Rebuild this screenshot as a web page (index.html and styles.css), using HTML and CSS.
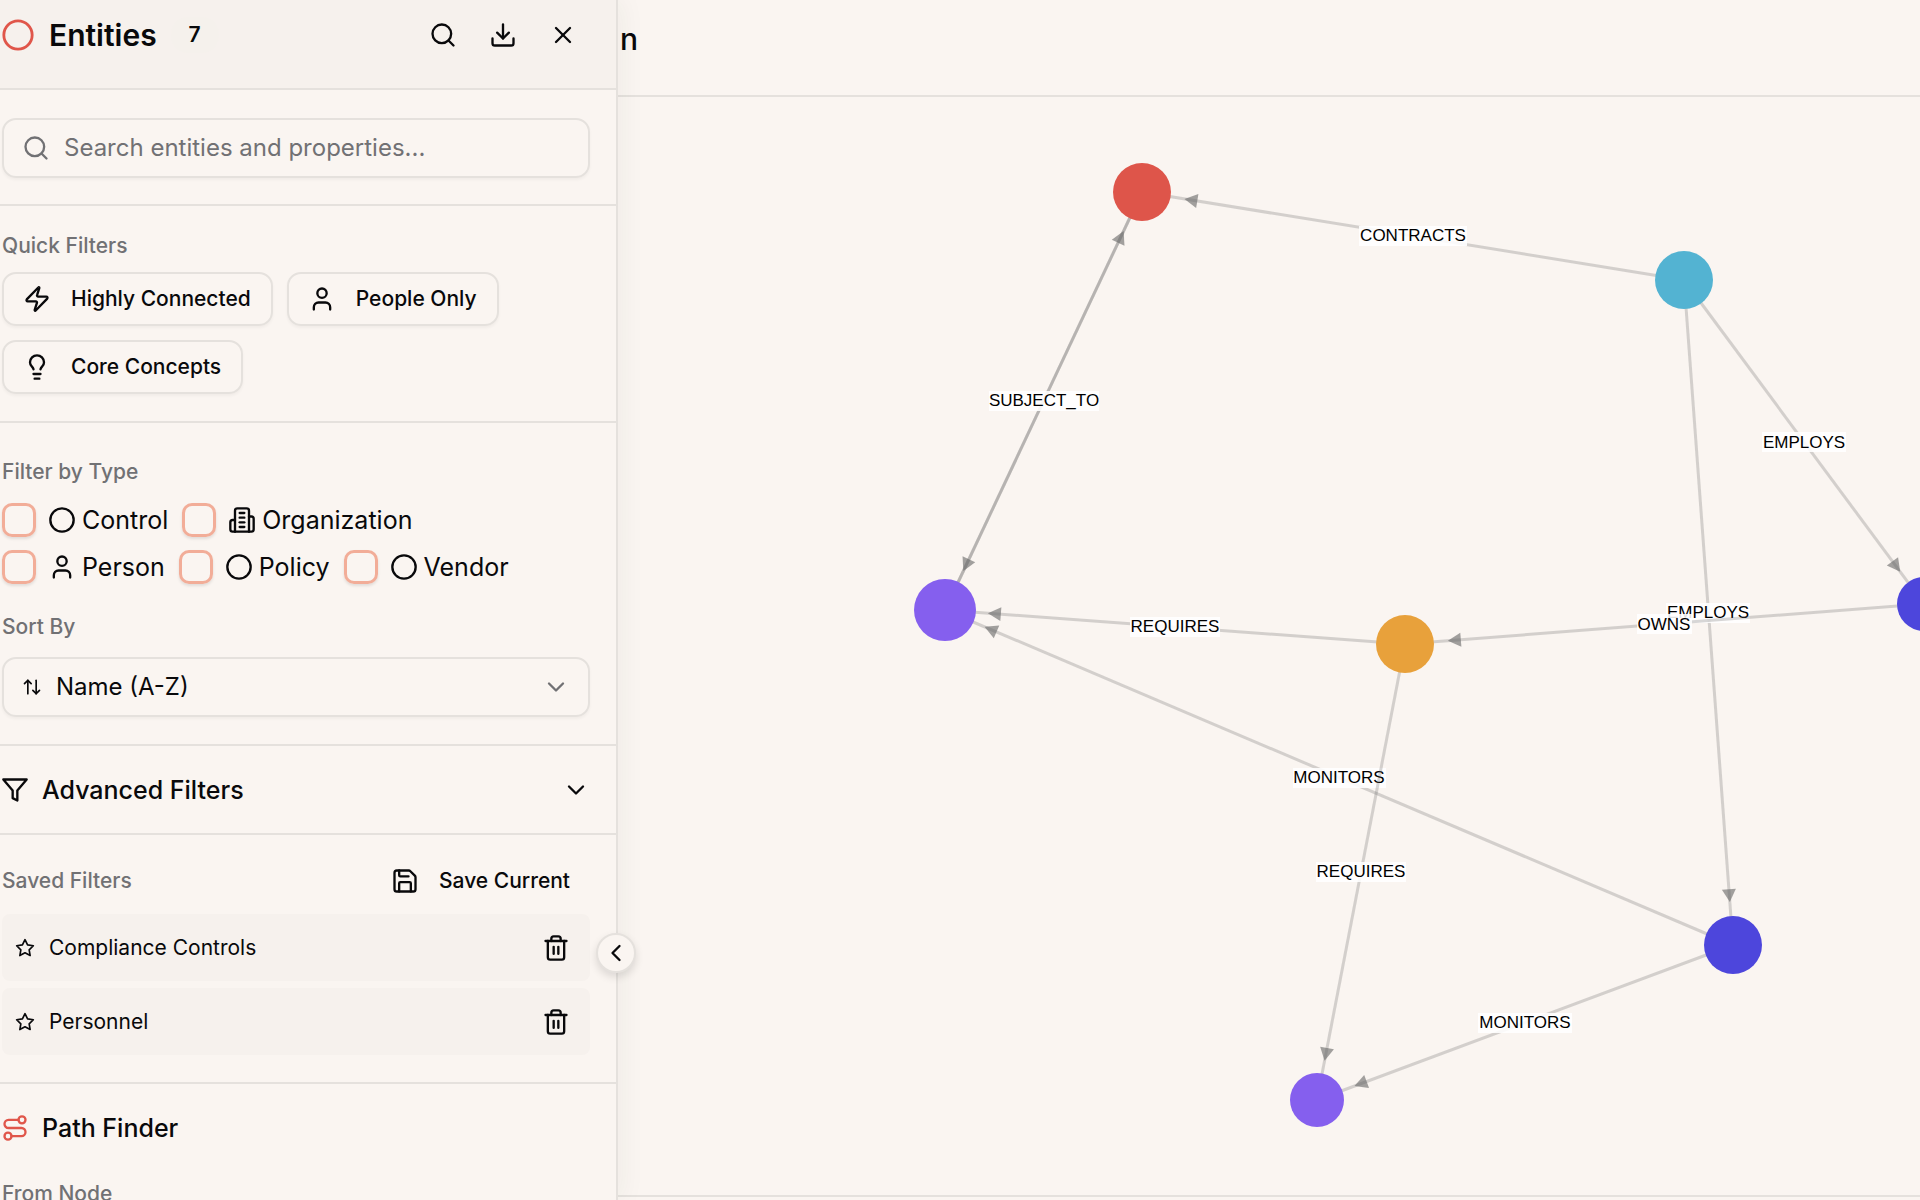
FILE: index.html
```html
<!DOCTYPE html>
<html lang="en">
<head>
<meta charset="utf-8">
<title>Entities</title>
<link rel="stylesheet" href="styles.css">
</head>
<body>
<svg class="sprite" aria-hidden="true">
  <symbol id="i-circle" viewBox="0 0 24 24"><circle cx="12" cy="12" r="10"/></symbol>
  <symbol id="i-search" viewBox="0 0 24 24"><circle cx="11" cy="11" r="8"/><path d="m21 21-4.3-4.3"/></symbol>
  <symbol id="i-download" viewBox="0 0 24 24"><path d="M21 15v4a2 2 0 0 1-2 2H5a2 2 0 0 1-2-2v-4"/><path d="m7 10 5 5 5-5"/><path d="M12 15V3"/></symbol>
  <symbol id="i-x" viewBox="0 0 24 24"><path d="M18 6 6 18"/><path d="m6 6 12 12"/></symbol>
  <symbol id="i-zap" viewBox="0 0 24 24"><path d="M4 14a1 1 0 0 1-.78-1.63l9.9-10.2a.5.5 0 0 1 .86.46l-1.92 6.02A1 1 0 0 0 13 10h7a1 1 0 0 1 .78 1.63l-9.9 10.2a.5.5 0 0 1-.86-.46l1.92-6.02A1 1 0 0 0 11 14z"/></symbol>
  <symbol id="i-user" viewBox="0 0 24 24"><path d="M19 21v-2a4 4 0 0 0-4-4H9a4 4 0 0 0-4 4v2"/><circle cx="12" cy="7" r="4"/></symbol>
  <symbol id="i-bulb" viewBox="0 0 24 24"><path d="M15 14c.2-1 .7-1.700 1.500-2.500 1-.9 1.500-2.200 1.500-3.500A6 6 0 0 0 6 8c0 1 .2 2.200 1.500 3.500.7.7 1.300 1.500 1.500 2.500"/><path d="M9 18h6"/><path d="M10 22h4"/></symbol>
  <symbol id="i-building" viewBox="0 0 24 24"><path d="M6 22V4a2 2 0 0 1 2-2h8a2 2 0 0 1 2 2v18Z"/><path d="M6 12H4a2 2 0 0 0-2 2v6a2 2 0 0 0 2 2h2"/><path d="M18 9h2a2 2 0 0 1 2 2v9a2 2 0 0 1-2 2h-2"/><path d="M10 6h4"/><path d="M10 10h4"/><path d="M10 14h4"/><path d="M10 18h4"/></symbol>
  <symbol id="i-sort" viewBox="0 0 24 24"><path d="m21 16-4 4-4-4"/><path d="M17 20V4"/><path d="m3 8 4-4 4 4"/><path d="M7 4v16"/></symbol>
  <symbol id="i-down" viewBox="0 0 24 24"><path d="m6 9 6 6 6-6"/></symbol>
  <symbol id="i-left" viewBox="0 0 24 24"><path d="m15 18-6-6 6-6"/></symbol>
  <symbol id="i-funnel" viewBox="0 0 24 24"><path d="M22 3H2l8 9.460V19l4 2v-8.540L22 3z"/></symbol>
  <symbol id="i-save" viewBox="0 0 24 24"><path d="M15.200 3a2 2 0 0 1 1.400.6l3.800 3.800a2 2 0 0 1 .6 1.400V19a2 2 0 0 1-2 2H5a2 2 0 0 1-2-2V5a2 2 0 0 1 2-2z"/><path d="M17 21v-7a1 1 0 0 0-1-1H8a1 1 0 0 0-1 1v7"/><path d="M7 3v4a1 1 0 0 0 1 1h7"/></symbol>
  <symbol id="i-star" viewBox="0 0 24 24"><path d="m12 2 3.090 6.260L22 9.270l-5 4.870 1.180 6.880L12 17.770l-6.180 3.250L7 14.140 2 9.270l6.910-1.010z"/></symbol>
  <symbol id="i-trash" viewBox="0 0 24 24"><path d="M3 6h18"/><path d="M19 6v14a2 2 0 0 1-2 2H7a2 2 0 0 1-2-2V6"/><path d="M8 6V4a2 2 0 0 1 2-2h4a2 2 0 0 1 2 2v2"/><path d="M10 11v6"/><path d="M14 11v6"/></symbol>
  <symbol id="i-route" viewBox="0 0 24 24"><circle cx="6" cy="19" r="3"/><path d="M9 19h8.500a3.500 3.500 0 0 0 0-7h-11a3.500 3.500 0 0 1 0-7H15"/><circle cx="18" cy="5" r="3"/></symbol>
</svg>

<div class="app">
  <aside class="sidebar">
    <div class="panel">
      <header class="panel-head">
        <svg class="icon icon-lg accent"><use href="#i-circle"/></svg>
        <h2 class="panel-title">Entities</h2>
        <span class="badge">7</span>
        <div class="panel-actions">
          <button class="icon-btn" aria-label="Search"><svg class="icon"><use href="#i-search"/></svg></button>
          <button class="icon-btn" aria-label="Download"><svg class="icon"><use href="#i-download"/></svg></button>
          <button class="icon-btn" aria-label="Close"><svg class="icon"><use href="#i-x"/></svg></button>
        </div>
      </header>

      <section class="section search-section">
        <div class="field">
          <svg class="icon muted"><use href="#i-search"/></svg>
          <input class="control" type="text" placeholder="Search entities and properties..." aria-label="Search entities and properties">
        </div>
      </section>

      <section class="section quick-section">
        <h3 class="label">Quick Filters</h3>
        <div class="chips">
          <button class="chip"><svg class="icon"><use href="#i-zap"/></svg>Highly Connected</button>
          <button class="chip"><svg class="icon"><use href="#i-user"/></svg>People Only</button>
          <button class="chip"><svg class="icon"><use href="#i-bulb"/></svg>Core Concepts</button>
        </div>
      </section>

      <section class="section type-section">
        <h3 class="label">Filter by Type</h3>
        <div class="types">
          <div class="type-row">
            <label class="type"><input class="check" type="checkbox"><svg class="icon"><use href="#i-circle"/></svg><span>Control</span></label>
            <label class="type"><input class="check" type="checkbox"><svg class="icon"><use href="#i-building"/></svg><span>Organization</span></label>
          </div>
          <div class="type-row">
            <label class="type"><input class="check" type="checkbox"><svg class="icon"><use href="#i-user"/></svg><span>Person</span></label>
            <label class="type"><input class="check" type="checkbox"><svg class="icon"><use href="#i-circle"/></svg><span>Policy</span></label>
            <label class="type"><input class="check" type="checkbox"><svg class="icon"><use href="#i-circle"/></svg><span>Vendor</span></label>
          </div>
        </div>
        <label class="label sort-label" for="sort">Sort By</label>
        <div class="field">
          <svg class="icon icon-sm"><use href="#i-sort"/></svg>
          <select class="control" id="sort"><option>Name (A-Z)</option></select>
          <svg class="icon muted"><use href="#i-down"/></svg>
        </div>
      </section>

      <section class="section">
        <button class="accordion">
          <svg class="icon"><use href="#i-funnel"/></svg>
          <span class="accordion-text">Advanced Filters</span>
          <svg class="icon"><use href="#i-down"/></svg>
        </button>
      </section>

      <section class="section saved-section">
        <div class="saved-head">
          <h3 class="label">Saved Filters</h3>
          <button class="save-btn"><svg class="icon"><use href="#i-save"/></svg>Save Current</button>
        </div>
        <ul class="saved-list">
          <li class="saved"><svg class="icon icon-sm"><use href="#i-star"/></svg><span class="saved-name">Compliance Controls</span><button class="icon-btn" aria-label="Delete Compliance Controls"><svg class="icon"><use href="#i-trash"/></svg></button></li>
          <li class="saved"><svg class="icon icon-sm"><use href="#i-star"/></svg><span class="saved-name">Personnel</span><button class="icon-btn" aria-label="Delete Personnel"><svg class="icon"><use href="#i-trash"/></svg></button></li>
        </ul>
      </section>

      <section class="path-section">
        <h3 class="path-title"><svg class="icon accent"><use href="#i-route"/></svg>Path Finder</h3>
        <div class="label">From Node</div>
      </section>
    </div>
    <button class="toggle" aria-label="Collapse panel"><svg class="icon"><use href="#i-left"/></svg></button>
  </aside>

  <main class="main">
    <header class="main-head"><h1 class="main-title">n</h1></header>
    <svg class="graph" viewBox="618 97 1302 1098" role="img" aria-label="Entity graph">
      <defs>
        <marker id="arrow-s" class="arrow" markerUnits="userSpaceOnUse" markerWidth="14" markerHeight="14" refX="40" orient="auto"><path d="M0 0-13-7V7z"/></marker>
        <marker id="arrow-m" class="arrow" markerUnits="userSpaceOnUse" markerWidth="14" markerHeight="14" refX="43" orient="auto"><path d="M0 0-13-7V7z"/></marker>
        <marker id="arrow-l" class="arrow" markerUnits="userSpaceOnUse" markerWidth="14" markerHeight="14" refX="43" orient="auto"><path d="M0 0-13-7V7z"/></marker>
      </defs>

      <line class="edge" x1="1142" y1="192" x2="945" y2="610" marker-end="url(#arrow-l)"/>
      <line class="edge" x1="945" y1="610" x2="1142" y2="192" marker-end="url(#arrow-m)"/>
      <rect class="tag" x="989" y="391" width="110" height="20"/><text class="tag-text" x="1044" y="406">SUBJECT_TO</text>

      <line class="edge" x1="1684" y1="280" x2="1142" y2="192" marker-end="url(#arrow-m)"/>
      <rect class="tag" x="1359" y="226" width="108" height="20"/><text class="tag-text" x="1413" y="241">CONTRACTS</text>

      <line class="edge" x1="1684" y1="280" x2="1924" y2="604" marker-end="url(#arrow-s)"/>
      <rect class="tag" x="1762" y="432" width="84" height="20"/><text class="tag-text" x="1804" y="448">EMPLOYS</text>

      <line class="edge" x1="1684" y1="280" x2="1733" y2="945" marker-end="url(#arrow-m)"/>
      <rect class="tag" x="1666" y="603" width="84" height="20"/><text class="tag-text" x="1708" y="618">EMPLOYS</text>

      <line class="edge" x1="1924" y1="604" x2="1405" y2="644" marker-end="url(#arrow-m)"/>
      <rect class="tag" x="1637" y="614" width="55" height="20"/><text class="tag-text" x="1664" y="630">OWNS</text>

      <line class="edge" x1="1405" y1="644" x2="945" y2="610" marker-end="url(#arrow-l)"/>
      <rect class="tag" x="1130" y="617" width="90" height="20"/><text class="tag-text" x="1175" y="632">REQUIRES</text>

      <line class="edge" x1="1733" y1="945" x2="945" y2="610" marker-end="url(#arrow-l)"/>
      <rect class="tag" x="1293" y="768" width="93" height="20"/><text class="tag-text" x="1339" y="783">MONITORS</text>

      <line class="edge" x1="1405" y1="644" x2="1317" y2="1100" marker-end="url(#arrow-s)"/>
      <rect class="tag" x="1316" y="862" width="90" height="20"/><text class="tag-text" x="1361" y="877">REQUIRES</text>

      <line class="edge" x1="1733" y1="945" x2="1317" y2="1100" marker-end="url(#arrow-s)"/>
      <rect class="tag" x="1478" y="1013" width="94" height="20"/><text class="tag-text" x="1525" y="1028">MONITORS</text>

      <circle class="node control-node" cx="1142" cy="192" r="29"/>
      <circle class="node vendor-node" cx="1684" cy="280" r="29"/>
      <circle class="node policy-node" cx="945" cy="610" r="31"/>
      <circle class="node org-node" cx="1405" cy="644" r="29"/>
      <circle class="node person-node" cx="1924" cy="604" r="27"/>
      <circle class="node person-node" cx="1733" cy="945" r="29"/>
      <circle class="node policy-node" cx="1317" cy="1100" r="27"/>
    </svg>
    <footer class="main-foot"></footer>
  </main>
</div>
</body>
</html>
```
FILE: styles.css
```css
:root {
  --bg: #faf5f1;
  --soft: #f6f1ed;
  --line: #e5e1dd;
  --ink: #09090b;
  --muted: #717174;
  --accent: #e0564a;
}

* { box-sizing: border-box; }

body {
  margin: 0;
  background: var(--bg);
  color: var(--ink);
  font-family: Inter, "Open Sans", sans-serif;
  font-size: 25px;
  line-height: 32px;
}

h1, h2, h3, ul { margin: 0; padding: 0; }

button {
  border: 0;
  padding: 0;
  background: none;
  color: inherit;
  font: inherit;
  cursor: pointer;
}

.sprite { display: none; }

.icon {
  flex: none;
  width: 28px;
  height: 28px;
  fill: none;
  stroke: currentColor;
  stroke-width: 2px;
  stroke-linecap: round;
  stroke-linejoin: round;
}
.icon-sm { width: 20px; height: 20px; }
.icon-lg { width: 34px; height: 34px; }
.accent { color: var(--accent); }
.muted { color: var(--muted); }

.app {
  display: flex;
  height: 100vh;
  overflow: hidden;
}

/* Sidebar */
.sidebar {
  position: relative;
  z-index: 1;
  flex: none;
  width: 618px;
  border-right: 2px solid var(--line);
  background: var(--bg);
  box-shadow: 4px 0 24px rgba(40, 50, 30, 0.05);
}
.panel { height: 100%; overflow: hidden; }

.panel-head {
  display: flex;
  align-items: center;
  height: 90px;
  padding: 0 39px 18px 1px;
  border-bottom: 2px solid var(--line);
  background: var(--soft);
}
.panel-title {
  margin-left: 14px;
  font-size: 30px;
  font-weight: 600;
}
.badge {
  margin-left: 14px;
  width: 48px;
  border-radius: 18px;
  background: #f5f1ec;
  font-size: 21px;
  font-weight: 600;
  line-height: 36px;
  text-align: center;
}
.panel-actions {
  display: flex;
  gap: 32px;
  margin-left: auto;
}
.icon-btn { display: flex; }

.section { border-bottom: 2px solid var(--line); }
.search-section { padding: 28px 26px 26px 2px; }
.quick-section { padding: 26px 26px 27px 2px; }
.type-section { padding: 35px 26px 27px 2px; }
.saved-section { padding: 19px 26px 27px 2px; }
.path-section { padding: 28px 26px 0 2px; }

.label {
  display: block;
  color: var(--muted);
  font-size: 21px;
  font-weight: 500;
  line-height: 28px;
}

.field {
  display: flex;
  align-items: center;
  gap: 14px;
  height: 60px;
  padding: 0 18px;
  border: 2px solid var(--line);
  border-radius: 14px;
  box-shadow: 0 2px 3px rgba(0, 0, 0, 0.04);
}
.control {
  flex: 1;
  min-width: 0;
  border: 0;
  padding: 0;
  outline: 0;
  background: none;
  color: inherit;
  font: inherit;
  font-size: 24px;
  appearance: none;
}
.control::placeholder { color: var(--muted); opacity: 1; }

.chips {
  display: flex;
  flex-wrap: wrap;
  gap: 14px;
  margin-top: 12px;
}
.chip {
  display: flex;
  align-items: center;
  gap: 20px;
  height: 54px;
  padding: 0 20px 0 19px;
  border: 2px solid var(--line);
  border-radius: 14px;
  box-shadow: 0 2px 3px rgba(0, 0, 0, 0.04);
  font-size: 21px;
  font-weight: 500;
}

.types { display: grid; gap: 13px; margin-top: 17px; }
.type-row { display: flex; gap: 14px; }
.type {
  display: flex;
  align-items: center;
  gap: 6px;
  height: 34px;
}
.check {
  appearance: none;
  width: 34px;
  height: 34px;
  margin: 0 6px 0 0;
  border: 3px solid #f2ad98;
  border-radius: 10px;
  box-shadow: 0 2px 3px rgba(0, 0, 0, 0.1);
}
.sort-label { margin: 29px 0 16px; }

.accordion {
  display: flex;
  align-items: center;
  gap: 13px;
  width: 100%;
  height: 87px;
  padding: 0 26px 0 1px;
  font-weight: 500;
}
.accordion-text { flex: 1; text-align: left; }

.saved-head {
  display: flex;
  align-items: center;
  justify-content: space-between;
  height: 54px;
  padding-right: 20px;
}
.save-btn {
  display: flex;
  align-items: center;
  gap: 20px;
  font-size: 21px;
  font-weight: 500;
}
.saved-list {
  display: grid;
  gap: 7px;
  margin-top: 6px;
  list-style: none;
}
.saved {
  display: flex;
  align-items: center;
  gap: 14px;
  height: 67px;
  padding: 0 20px 0 13px;
  border-radius: 8px;
  background: var(--soft);
}
.saved-name { flex: 1; font-size: 21px; }

.path-title {
  display: flex;
  align-items: center;
  gap: 13px;
  margin: 0 0 36px -1px;
  font-size: 25px;
  font-weight: 500;
}

.toggle {
  position: absolute;
  top: 933px;
  right: -20px;
  display: grid;
  place-items: center;
  width: 40px;
  height: 40px;
  border: 2px solid var(--line);
  border-radius: 50%;
  background: var(--bg);
  box-shadow: 0 4px 8px rgba(0, 0, 0, 0.12);
}

/* Graph area */
.main {
  display: flex;
  flex: 1;
  flex-direction: column;
  min-width: 0;
}
.main-head {
  height: 97px;
  padding: 20px 2px;
  border-bottom: 2px solid var(--line);
}
.main-title { font-size: 30px; font-weight: 500; line-height: 38px; }
.graph { flex: 1; min-height: 0; width: 100%; }
.main-foot { height: 5px; border-top: 2px solid var(--line); }

.edge { stroke: #666; stroke-width: 3px; stroke-opacity: 0.26; }
.arrow { overflow: visible; fill: #666; fill-opacity: 0.6; }
.tag { fill: #fff; fill-opacity: 0.88; }
.tag-text {
  fill: #000;
  font-family: "Liberation Sans", Arial, sans-serif;
  font-size: 17px;
  text-anchor: middle;
}
.control-node { fill: #de554a; }
.vendor-node { fill: #53b3d2; }
.policy-node { fill: #855fee; }
.org-node { fill: #e8a13b; }
.person-node { fill: #4d46dc; }
```
